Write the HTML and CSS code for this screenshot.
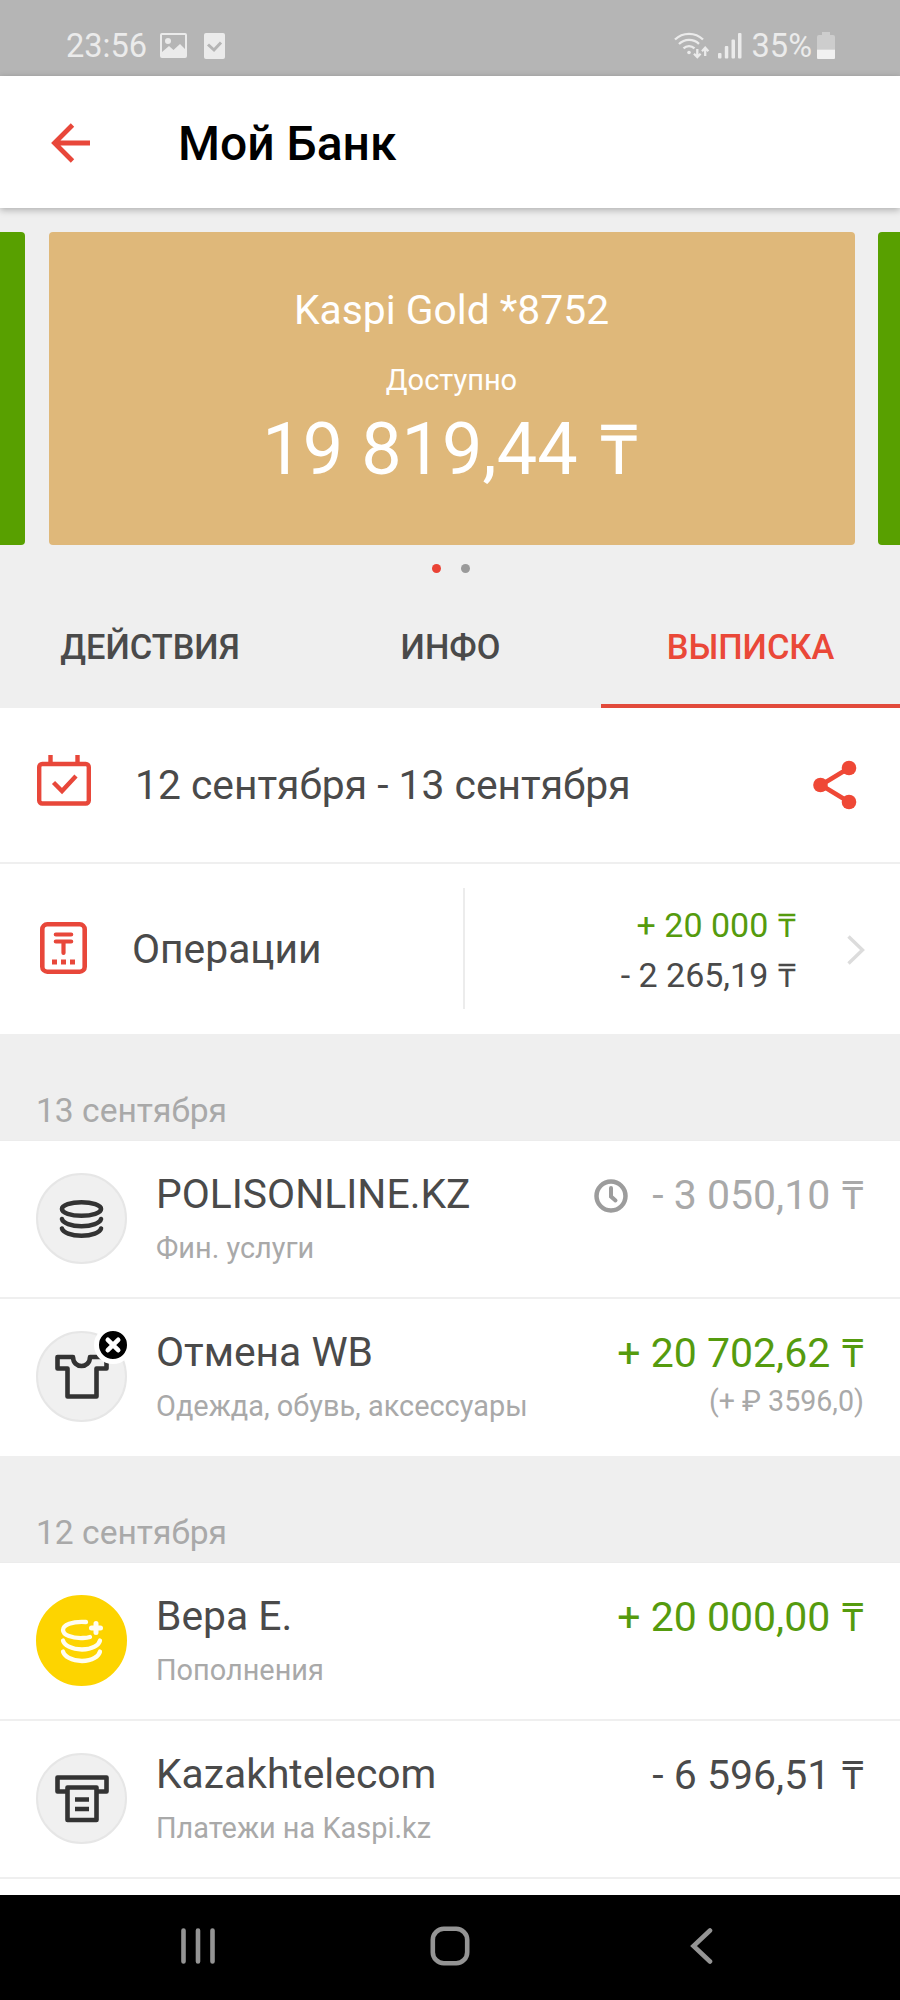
FILE: index.html
```html
<!DOCTYPE html>
<html lang="ru">
<head>
<meta charset="utf-8">
<title>Мой Банк</title>
<link rel="stylesheet" href="styles.css">
</head>
<body>
<div class="screen">
  <div class="status">
    <span class="status-time">23:56</span>
    <svg class="status-photo" width="27" height="25" viewBox="0 0 27 25"><path fill-rule="evenodd" fill="#ebebeb" d="M2 0h23a2 2 0 0 1 2 2v21a2 2 0 0 1-2 2H2a2 2 0 0 1-2-2V2a2 2 0 0 1 2-2zM2 2v17l7-6 4.500 4L20 11l5 5V2zM8 5a3 3 0 1 1 0 6a3 3 0 1 1 0-6z"/></svg>
    <svg class="status-check" width="21" height="26" viewBox="0 0 21 26"><rect width="21" height="26" rx="2" fill="#ebebeb"/><path d="M4 11.500l6 5.500 7-7.500" fill="none" stroke="#b5b5b5" stroke-width="3"/></svg>
    <svg class="status-wifi" width="36" height="28" viewBox="0 0 36 28" fill="none" stroke="#ebebeb" stroke-width="2.300"><path d="M1 7.500a20 20 0 0 1 28 0M5 12a14.500 14.500 0 0 1 20-.2M9.500 16.300a8 8 0 0 1 11 0"/><circle cx="15" cy="20.500" r="1.800" fill="#ebebeb" stroke="none"/><path d="M23.300 17v8M20 21.800l3.300 3.400 3.300-3.400M31.200 24v-8M28 19.200l3.200-3.400 3.200 3.400"/></svg>
    <svg class="status-signal" width="24" height="26" viewBox="0 0 24 26" fill="#ebebeb"><rect y="20" width="3.500" height="5.500" rx="1"/><rect x="6.800" y="13" width="3.500" height="12.500" rx="1"/><rect x="13.500" y="6.500" width="3.500" height="19" rx="1"/><rect x="20" y="0" width="3.500" height="25.500" rx="1"/></svg>
    <span class="status-battery-text">35%</span>
    <svg class="status-battery" width="18" height="27" viewBox="0 0 18 27"><path d="M5 0h8v3h3a2 2 0 0 1 2 2v12.500H0V5a2 2 0 0 1 2-2h3z" fill="#cdcdcd"/><path d="M0 17.500h18V26a1 1 0 0 1-1 1H1a1 1 0 0 1-1-1z" fill="#f1f1f1"/></svg>
  </div>

  <header class="header">
    <svg class="back" width="40" height="40" viewBox="0 0 40 40" fill="none" stroke="#e8473a" stroke-width="4.800"><path d="M21.500 2L3.500 20l18 18M3.500 20H39"/></svg>
    <h1 class="title">Мой Банк</h1>
  </header>

  <section class="carousel">
    <div class="card card-side card-left"></div>
    <div class="card card-main">
      <div class="card-name">Kaspi Gold *8752</div>
      <div class="card-label">Доступно</div>
      <div class="card-sum">19 819,44 <span class="cur">₸</span></div>
    </div>
    <div class="card card-side card-right"></div>
  </section>
  <div class="dots"><i class="dot dot-on"></i><i class="dot"></i></div>

  <nav class="tabs">
    <div class="tab">ДЕЙСТВИЯ</div>
    <div class="tab">ИНФО</div>
    <div class="tab tab-on">ВЫПИСКА</div>
  </nav>

  <div class="period">
    <svg class="period-icon" width="54" height="52" viewBox="0 0 54 52" fill="none" stroke="#e8473a" stroke-width="4.400"><rect x="2.200" y="9" width="49.600" height="39.500" rx="3"/><path d="M13.500 0v9M40.500 0v9"/><path d="M16.500 27.500l8.500 8.500 14-15"/></svg>
    <div class="period-text">12 сентября - 13 сентября</div>
    <svg class="share" width="46" height="50" viewBox="0 0 46 50" fill="#ef4836"><path d="M37 8L9 25l28 17" fill="none" stroke="#ef4836" stroke-width="4.600"/><circle cx="37" cy="8" r="7.300"/><circle cx="8.500" cy="25" r="7.300"/><circle cx="37" cy="42" r="7.300"/></svg>
  </div>

  <div class="ops">
    <div class="ops-left">
      <svg class="ops-icon" width="47" height="52" viewBox="0 0 47 52" fill="none" stroke="#e8473a"><rect x="2.300" y="2.300" width="42.400" height="47.400" rx="5" stroke-width="4.600"/><path d="M15.800 12.500h15.400M15.800 19.500h15.400M23.500 19.500V31" stroke-width="4.200" stroke-linecap="round"/><path d="M12 40h5M21 40h5M30 40h5" stroke-width="5"/></svg>
      <div class="ops-title">Операции</div>
    </div>
    <div class="ops-sums">
      <div class="sum-in">+ 20 000 <span class="cur">₸</span></div>
      <div class="sum-out">- 2 265,19 <span class="cur">₸</span></div>
    </div>
    <svg class="chevron" width="18" height="30" viewBox="0 0 18 30" fill="none" stroke="#dcdcdc" stroke-width="3.400"><path d="M1.500 1.500L15.500 15l-14 13.500"/></svg>
  </div>

  <h2 class="day">13 сентября</h2>
  <div class="list">
    <div class="row">
      <div class="avatar">
        <svg width="45" height="41" viewBox="0 0 45 41" fill="none" stroke="#333" stroke-width="4.600" stroke-linecap="round"><ellipse cx="22.500" cy="11" rx="19.500" ry="6.800"/><path d="M3 21c1 4 9 7.200 19.500 7.200S41 25 42 21M3 30.500c1 4 9 7.200 19.500 7.200S41 34.500 42 30.500"/></svg>
      </div>
      <div class="info"><div class="name">POLISONLINE.KZ</div><div class="kind">Фин. услуги</div></div>
      <svg class="clock" width="34" height="34" viewBox="0 0 34 34" fill="none" stroke="#9c9c9c"><circle cx="17" cy="17" r="14.500" stroke-width="4.500"/><path d="M17 9v8.500l4.500 4" stroke-width="4" stroke-linecap="round"/></svg>
      <div class="money"><div class="amount pending">- 3 050,10 <span class="cur">₸</span></div></div>
    </div>
    <div class="row row-last">
      <div class="avatar">
        <svg width="54" height="46" viewBox="0 0 54 46" fill="none" stroke="#333" stroke-width="4.600" stroke-linejoin="round"><path d="M2.500 3h15.500c0 12 17 12 17 0h16.500v11.500H41.500V42.500H12.500V14.500h-10z"/></svg>
        <span class="cancel"><svg width="28" height="28" viewBox="0 0 28 28"><path d="M8.800 8.800l10.400 10.400M19.200 8.800L8.800 19.200" stroke="#fff" stroke-width="4.600" stroke-linecap="round"/></svg></span>
      </div>
      <div class="info"><div class="name">Отмена WB</div><div class="kind">Одежда, обувь, аксессуары</div></div>
      <div class="money"><div class="amount income">+ 20 702,62 <span class="cur">₸</span></div><div class="foreign">(+ ₽ 3596,0)</div></div>
    </div>
  </div>

  <h2 class="day">12 сентября</h2>
  <div class="list list-tail">
    <div class="row">
      <div class="avatar avatar-yellow">
        <svg width="46" height="46" viewBox="0 0 46 46" fill="none" stroke="#fffdf0" stroke-width="4.300" stroke-linecap="round"><path d="M27 4.500C13 3.500 4 7.500 4 12.500c0 5 9 8.500 20 8 3 0 5-.3 7-1M4 23c1 4.500 8.500 9 19 9s17-4.500 18-9M4 34c1 4.500 8.500 9.500 19 9.500S40 38.500 41 34" transform="translate(0 -.5)"/><path d="M37 5.500v9M32.500 10h9" stroke-width="5"/></svg>
      </div>
      <div class="info"><div class="name">Вера Е.</div><div class="kind">Пополнения</div></div>
      <div class="money"><div class="amount income">+ 20 000,00 <span class="cur">₸</span></div></div>
    </div>
    <div class="row">
      <div class="avatar">
        <svg width="54" height="50" viewBox="0 0 54 50" fill="none" stroke="#333" stroke-width="4.600" stroke-linejoin="round"><path d="M12.500 17.500h-10v-14h49v14h-10"/><path d="M12.500 13.500h29v32.500h-29z"/><path d="M20 25.500h14M20 35h14"/></svg>
      </div>
      <div class="info"><div class="name">Kazakhtelecom</div><div class="kind">Платежи на Kaspi.kz</div></div>
      <div class="money"><div class="amount">- 6 596,51 <span class="cur">₸</span></div></div>
    </div>
  </div>

  <div class="navbar">
    <svg width="34" height="38" viewBox="0 0 34 38" stroke="#949494" stroke-width="4.600" stroke-linecap="round"><path d="M2.500 3.500v31M17 3.500v31M31.500 3.500v31"/></svg>
    <svg class="nav-home" width="40" height="40" viewBox="0 0 40 40" fill="none" stroke="#949494" stroke-width="4.600"><rect x="2.800" y="2.800" width="34.400" height="34.400" rx="11"/></svg>
    <svg width="24" height="38" viewBox="0 0 24 38" fill="none" stroke="#949494" stroke-width="4.600" stroke-linecap="round"><path d="M21 3.500L4.500 19 21 34.500"/></svg>
  </div>
</div>
</body>
</html>
```
FILE: styles.css
```css
* { box-sizing: border-box; }
body { margin: 0; background: #fff; font-family: Roboto, "Liberation Sans", sans-serif; color: #4a4a4a; }
svg { display: block; flex: none; }
h1, h2 { margin: 0; font-weight: 400; }
.screen { width: 900px; height: 2000px; display: flex; flex-direction: column; overflow: hidden; white-space: nowrap; background: #efefef; }
.screen > * { flex: none; }
.cur { margin-left: .04em; font-size: .96em; line-height: 1; }

.status { height: 76px; padding: 15px 65px 0 66px; display: flex; align-items: center; background: #b5b5b5; color: #ebebeb; font-size: 32.600px; line-height: 40px; }
.status-time { width: 94px; }
.status-check { margin-left: 17px; }
.status-wifi { margin-left: auto; }
.status-signal { margin-left: 8px; }
.status-battery-text { margin-left: 10px; }
.status-battery { margin-left: 5px; }

.header { position: relative; height: 132px; padding: 1px 0 0 51px; display: flex; align-items: center; background: #fff; box-shadow: 0 2px 7px rgba(0, 0, 0, .28); }
.title { margin: 2px 0 0 87px; font-size: 48px; line-height: 60px; font-weight: 500; color: #000; }

.carousel { height: 313px; margin-top: 24px; display: flex; justify-content: space-between; }
.card { background: #58a000; }
.card-left { width: 25px; border-radius: 0 4px 4px 0; }
.card-right { width: 22px; border-radius: 4px 0 0 4px; }
.card-main { width: 806px; border-radius: 4px; background: #dfb87a; color: #fff; text-align: center; padding-top: 54px; }
.card-name { font-size: 40.800px; line-height: 48px; }
.card-label { margin-top: 28px; font-size: 29px; line-height: 36px; }
.card-sum { margin-top: 12px; padding-right: 3px; font-size: 72px; line-height: 80px; }
.card-sum .cur { margin-left: .06em; }

.dots { height: 87px; padding: 19px 0 0 1px; display: flex; justify-content: center; gap: 20px; }
.dot { width: 9px; height: 9px; border-radius: 50%; background: #9a9a9a; }
.dot-on { background: #ea4335; }

.tabs { height: 76px; display: grid; grid-template-columns: 300px 301px 299px; }
.tab { text-align: center; font-size: 34.400px; line-height: 30px; font-weight: 500; }
.tab-on { color: #ea4838; border-bottom: 4px solid #e24a3b; }

.period { height: 156px; padding: 0 42px 0 37px; display: flex; align-items: center; background: #fff; border-bottom: 2px solid #efefef; }
.period-icon { margin-bottom: 8px; }
.period-text { flex: 1; margin-left: 44px; font-size: 40.800px; line-height: 48px; }

.ops { height: 170px; padding: 24px 35px 25px 40px; display: flex; align-items: center; background: #fff; }
.ops-left { width: 425px; height: 121px; display: flex; align-items: center; border-right: 2px solid #ececec; }
.ops-icon { margin-bottom: 2px; }
.ops-title { margin-left: 45px; font-size: 40.800px; line-height: 48px; }
.ops-sums { flex: 1; padding-top: 3px; text-align: right; font-size: 34px; line-height: 50.500px; }
.sum-in, .income { color: #559b0e; }
.chevron { margin-left: 51px; margin-top: 3px; }

.day { height: 106px; padding: 55px 0 0 36px; font-size: 33.600px; line-height: 44px; color: #a9a9a9; }

.list { background: #fff; border-top: 1px solid #ececec; }
.list-tail { height: 333px; }
.row { height: 158px; padding: 0 36px; display: flex; border-bottom: 2px solid #efefef; }
.row-last { height: 157px; border-bottom: 0; }
.avatar { position: relative; width: 91px; height: 91px; margin-top: 32px; border-radius: 50%; border: 2px solid #e6e6e6; background: #f0f0f0; display: flex; align-items: center; justify-content: center; }
.avatar-yellow { background: #fdd400; border-color: #fdd400; }
.cancel { position: absolute; right: -7px; top: -7px; border: 5px solid #fff; border-radius: 50%; background: #000; }
.info { flex: 1; margin-left: 29px; padding-top: 29px; }
.name { font-size: 40.800px; line-height: 48px; }
.kind { margin-top: 12px; font-size: 28.900px; line-height: 36px; color: #a9a9a9; }
.clock { margin: 38px 24px 0 0; }
.money { padding-top: 30px; text-align: right; }
.amount { padding-right: 1px; font-size: 41px; line-height: 48px; }
.pending, .foreign { color: #a9a9a9; }
.foreign { margin-top: 6px; font-size: 28.600px; line-height: 36px; }

.navbar { height: 105px; padding: 0 187px 4px 181px; display: flex; align-items: center; justify-content: space-between; background: #000; }
.nav-home { margin-right: 5px; }
```
